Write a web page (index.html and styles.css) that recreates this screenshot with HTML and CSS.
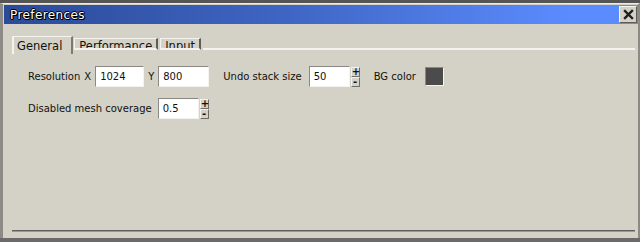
FILE: index.html
```html
<!DOCTYPE html>
<html lang="en">
<head>
  <meta charset="UTF-8">
  <title>Preferences</title>
  <link rel="stylesheet" href="styles.css">
</head>
<body>
  <div class="desk-top"></div>
  <div class="window">
    <div class="titlebar">
      <span class="title">Preferences</span>
      <button class="close">
        <svg width="11" height="11" viewBox="0 0 11 11">
          <path d="M2 2 L9 9 M9 2 L2 9" stroke="#1e1e1e" stroke-width="2.4" stroke-linecap="square"/>
        </svg>
      </button>
    </div>

    <div class="body">
      <div class="tabs">
        <div class="tab active">General</div>
        <div class="tab">Performance</div>
        <div class="tab">Input</div>
        <div class="tab-rest"></div>
      </div>

      <div class="panel">
        <div class="row">
          <span class="label">Resolution</span>
          <span class="label axis">X</span>
          <input class="field w48" type="text" value="1024">
          <span class="label axis">Y</span>
          <input class="field w50" type="text" value="800">
          <span class="label gap-l">Undo stack size</span>
          <div class="spin">
            <input class="field w40" type="text" value="50">
            <div class="spin-btns">
              <span class="sb">+</span>
              <span class="sb">-</span>
            </div>
          </div>
          <span class="label gap-l swatch-label">BG color</span>
          <span class="swatch"></span>
        </div>

        <div class="row">
          <span class="label wide">Disabled mesh coverage</span>
          <div class="spin">
            <input class="field w40" type="text" value="0.5">
            <div class="spin-btns">
              <span class="sb">+</span>
              <span class="sb">-</span>
            </div>
          </div>
        </div>
      </div>

      <div class="footer-line"></div>
    </div>
  </div>
  <div class="desk-bottom"></div>
</body>
</html>
```

FILE: styles.css
```css
html, body {
  margin: 0;
  padding: 0;
  width: 640px;
  height: 242px;
  overflow: hidden;
  background: #3c3c3c;
  font-family: "DejaVu Sans", Verdana, sans-serif;
}

.desk-top {
  height: 3px;
  background: #555;
}

.window {
  width: 640px;
  height: 235px;
  background: #d4d1c6;
  border-top: 1px solid #ecebe5;
  border-left: 3px solid #8c8a84;
  border-right: 2px solid #8c8a84;
  box-sizing: border-box;
  padding: 1px 0 0 1px;
  display: flex;
  flex-direction: column;
}

.titlebar {
  height: 19px;
  display: flex;
  align-items: center;
  justify-content: space-between;
  padding: 0 1px 0 6px;
  background: linear-gradient(to right, #2b4a98 0%, #3f66c4 45%, #5b8cff 90%, #5b8cff 100%);
}

.title {
  color: #fff;
  font-size: 12px;
  letter-spacing: 0.4px;
  text-shadow: 1px 0 0 #000, -1px 0 0 #000, 0 1px 0 #000, 0 -1px 0 #000, 1px 1px 0 #000;
}

.close {
  width: 18px;
  height: 17px;
  padding: 0;
  display: flex;
  align-items: center;
  justify-content: center;
  background: #d4d1c6;
  border: 1px solid;
  border-color: #f4f3ef #5e5c58 #5e5c58 #f4f3ef;
}

.body {
  flex: 1;
  display: flex;
  flex-direction: column;
  padding: 11px 3px 0 8px;
}

.tabs {
  display: flex;
  align-items: flex-end;
  height: 15px;
}

/* inactive tabs sit lower, their labels are cut by the strip line */
.tab {
  height: 9px;
  font-size: 11.5px;
  line-height: 15px;
  padding: 0 4px;
  margin-right: 2px;
  overflow: hidden;
  color: #111;
  border-top: 1px solid #f4f3ef;
  border-left: 1px solid #f4f3ef;
  border-right: 2px solid #5e5c58;
  border-bottom: 2px solid #f4f3ef;
}

.tab.active {
  height: 17px;
  line-height: 19px;
  padding: 0 9px 0 3px;
  margin-bottom: -4px;
  margin-right: 1px;
  border-bottom: none;
  border-left: 2px solid #f4f3ef;
  border-right: 2px solid #7c7a74;
  background: #d4d1c6;
  position: relative;
}

.tab-rest {
  flex: 1;
  border-bottom: 2px solid #f4f3ef;
}

.panel {
  padding: 16px 0 0 16px;
  display: flex;
  flex-direction: column;
  gap: 11px;
}

.row {
  display: flex;
  align-items: center;
  height: 21px;
}

.label {
  font-size: 10px;
  color: #111;
}

.axis {
  margin: 0 4px;
}

.gap-l {
  margin: 0 7px 0 14px;
}

.swatch-label {
  margin-right: 9px;
}

.wide {
  margin-right: 6px;
}

.field {
  height: 21px;
  box-sizing: border-box;
  padding: 0 0 0 4px;
  font-family: "DejaVu Sans", Verdana, sans-serif;
  font-size: 10px;
  color: #111;
  background: #fff;
  border: 1px solid;
  border-color: #8a8882 #f4f3ef #f4f3ef #8a8882;
  outline: none;
}

.w48 { width: 49px; }
.w50 { width: 51px; }
.w40 { width: 41px; }

.spin {
  display: flex;
  align-items: center;
}

.spin-btns {
  display: flex;
  flex-direction: column;
  margin-left: 1px;
}

.sb {
  width: 7px;
  height: 8px;
  font-size: 10px;
  line-height: 7px;
  text-align: center;
  font-weight: bold;
  color: #111;
  background: #d4d1c6;
  border: 1px solid;
  border-color: #f4f3ef #6e6c68 #6e6c68 #f4f3ef;
  box-sizing: content-box;
}

.swatch {
  width: 17px;
  height: 17px;
  background: #4b4b4b;
  border: 1px solid;
  border-color: #8a8882 #f4f3ef #f4f3ef #8a8882;
}

.footer-line {
  margin-top: auto;
  margin-bottom: 6px;
  height: 1px;
  background: #5e5e5e;
  border-bottom: 1px solid #9a9892;
}

.desk-bottom {
  height: 4px;
  background: #6a6a6a;
}
```
